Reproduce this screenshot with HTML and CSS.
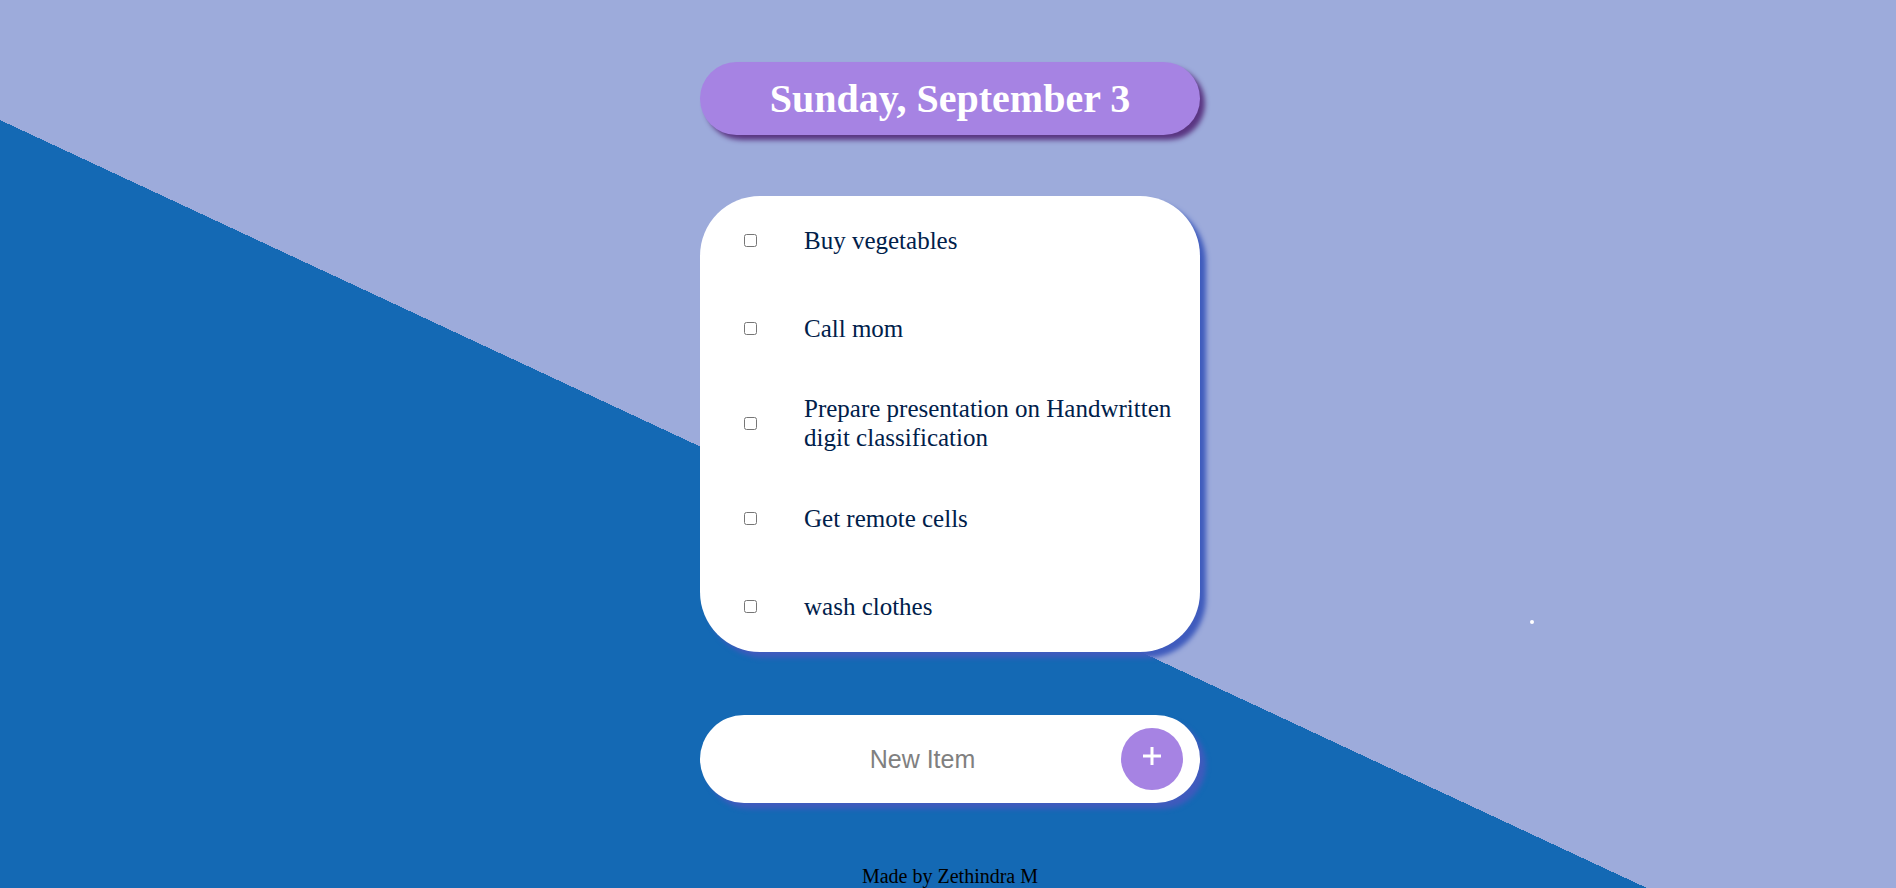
FILE: index.html
```html
<!DOCTYPE html>
<html lang="en">
<head>
<meta charset="utf-8">
<title>To-Do List</title>
<link rel="stylesheet" href="styles.css">
</head>
<body>
<div class="page">
  <div class="heading">
    <h1 class="title">Sunday, September 3</h1>
  </div>

  <div class="card">
    <div class="item"><input type="checkbox" class="check"><p class="label">Buy vegetables</p></div>
    <div class="item"><input type="checkbox" class="check"><p class="label">Call mom</p></div>
    <div class="item"><input type="checkbox" class="check"><p class="label">Prepare presentation on Handwritten digit classification</p></div>
    <div class="item"><input type="checkbox" class="check"><p class="label">Get remote cells</p></div>
    <div class="item"><input type="checkbox" class="check"><p class="label">wash clothes</p></div>
  </div>

  <form class="new-item">
    <input type="text" class="new-input" name="newItem" placeholder="New Item" autocomplete="off">
    <button type="button" class="add-btn" aria-label="Add">
      <svg class="plus" width="20" height="20" viewBox="0 0 20 20"><path d="M10 1 V19 M1 10 H19" stroke="#ffffff" stroke-width="3" fill="none"/></svg>
    </button>
  </form>

  <footer class="footer">Made by Zethindra M</footer>

  <span class="dot"></span>
</div>
</body>
</html>
```

FILE: styles.css
```css
html, body {
  margin: 0;
  padding: 0;
}

body {
  font-family: "Liberation Serif", "Times New Roman", serif;
}

.page {
  position: relative;
  height: 888px;
  overflow: hidden;
  box-sizing: border-box;
  padding: 62px 0 0 4px;
  display: flex;
  flex-direction: column;
  align-items: center;
  background-color: #9dabdb;
  background-image: linear-gradient(25deg, #1469b4 696px, #9dabdb 696px);
}

.heading {
  width: 500px;
  box-sizing: border-box;
  padding: 14px 0 13px;
  background-color: #a683e3;
  border-radius: 37px;
  text-align: center;
  box-shadow: 5px 5px 5px #5a3582;
}

.title {
  margin: 0;
  color: #ffffff;
  font-family: "Liberation Serif", "Times New Roman", serif;
  font-size: 40px;
  font-weight: bold;
  line-height: 46px;
}

.card {
  width: 500px;
  margin-top: 61px;
  padding-bottom: 2px;
  background: #ffffff;
  border-radius: 60px;
  box-shadow: 6px 6px 5px #3f5bbd;
}

.item {
  min-height: 88px;
  display: flex;
  align-items: center;
}

.check {
  width: 13px;
  height: 13px;
  margin: 0 0 0 44px;
  flex: none;
}

.label {
  margin: 0;
  padding: 22px 20px 22px 47px;
  font-family: "Liberation Serif", "Times New Roman", serif;
  font-size: 25px;
  line-height: 29px;
  color: #00204a;
}

.new-item {
  width: 500px;
  height: 88px;
  box-sizing: border-box;
  margin: 63px 0 0;
  padding: 0 17px 0 24px;
  display: flex;
  align-items: center;
  background: #ffffff;
  border-radius: 44px;
  box-shadow: 6px 6px 5px #3f5bbd;
}

.new-input {
  flex: 1;
  min-width: 0;
  height: 60px;
  padding: 0;
  border: none;
  background: transparent;
  text-align: center;
  font-family: "Liberation Sans", Arial, sans-serif;
  font-size: 25px;
  color: #333333;
  outline: none;
}

.new-input::placeholder {
  color: #808080;
  opacity: 1;
}

.add-btn {
  width: 62px;
  height: 62px;
  flex: none;
  margin: 0;
  padding: 0 0 6px;
  border: none;
  border-radius: 50%;
  background-color: #a683e3;
  display: flex;
  align-items: center;
  justify-content: center;
}

.plus {
  display: block;
}

.footer {
  margin-top: 62px;
  font-family: "Liberation Serif", "Times New Roman", serif;
  font-size: 20px;
  line-height: 23px;
  color: #000000;
  text-align: center;
}

.dot {
  position: absolute;
  left: 1530px;
  top: 620px;
  width: 4px;
  height: 4px;
  border-radius: 50%;
  background: #ffffff;
}
```
